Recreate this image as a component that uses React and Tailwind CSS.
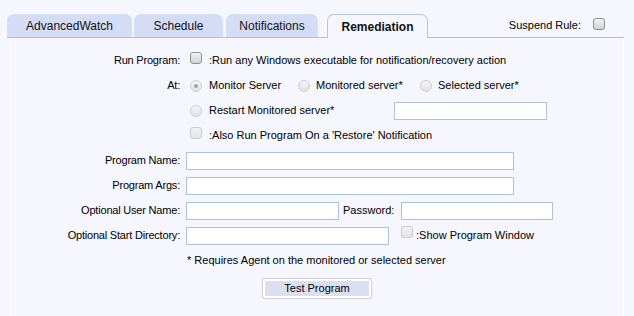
import React from 'react';

const Check = ({ disabled }) => (
  <span
    className={`inline-block w-[12px] h-[12px] shrink-0 rounded-[3px] border ${
      disabled
        ? 'border-[#cbcbcb] bg-linear-to-b from-[#f3f3f3] to-[#e4e4e4]'
        : 'border-[#8f8f8f] bg-linear-to-b from-[#f2f2f2] to-[#d3d3d3]'
    }`}
  />
);

const Radio = ({ checked }) => (
  <span className="flex items-center justify-center w-[12px] h-[12px] shrink-0 rounded-full border border-[#cdcdcd] bg-linear-to-b from-[#f6f6f6] to-[#e2e2e2]">
    {checked && <span className="w-[4px] h-[4px] rounded-full bg-[#a0a0a0]" />}
  </span>
);

const Field = ({ className }) => (
  <input
    type="text"
    className={`h-[18px] border border-[#abc1dd] bg-white outline-none text-[11px] px-1 ${className}`}
  />
);

const Row = ({ label, children }) => (
  <div className="flex h-[25px] items-center">
    <div className="w-[170px] pr-[1px] text-right tracking-[-0.2px]">{label}</div>
    <div className="ml-[5px] flex items-center">{children}</div>
  </div>
);

const tabs = [
  { name: 'AdvancedWatch', w: 'w-[125px]', m: '' },
  { name: 'Schedule', w: 'w-[89px]', m: 'ml-[2px]' },
  { name: 'Notifications', w: 'w-[92px]', m: 'ml-[3px]' },
];

export default function App() {
  return (
    <div className="w-[634px] h-[316px] overflow-hidden bg-[#f5f6fe] text-[11px] text-black font-['Liberation_Sans',Arial,sans-serif]">
      {/* tab strip */}
      <div className="flex items-end pt-[14px] ml-[7px] mr-[10px] border-b border-[#aec0dc]">
        {tabs.map((t) => (
          <div
            key={t.name}
            className={`${t.w} ${t.m} h-[23px] flex items-center justify-center rounded-t-[7px] bg-[#d5ddf6] text-[12px] text-[#111]`}
          >
            {t.name}
          </div>
        ))}
        <div className="ml-[9px] w-[101px] h-[24px] -mb-px flex items-center justify-center rounded-t-[7px] border border-b-0 border-[#b5c6e0] bg-[#f5f6fe] text-[12px] font-bold text-[#111]">
          Remediation
        </div>
        <div className="ml-auto mr-[19px] self-center flex items-center">
          <span>Suspend Rule:</span>
          <span className="ml-[12px] mt-[1px]">
            <Check />
          </span>
        </div>
      </div>

      {/* panel */}
      <div className="mx-[10px] h-[280px] border-x border-white pt-[10px]">
        <Row label="Run Program:">
          <span className="ml-[4px]"><Check /></span>
          <span className="ml-[7px]">:Run any Windows executable for notification/recovery action</span>
        </Row>
        <Row label="At:">
          <span className="ml-[4px] w-[108px] flex items-center">
            <Radio checked />
            <span className="ml-[7px]">Monitor Server</span>
          </span>
          <span className="w-[122px] flex items-center">
            <Radio />
            <span className="ml-[6px]">Monitored server*</span>
          </span>
          <span className="flex items-center">
            <Radio />
            <span className="ml-[6px]">Selected server*</span>
          </span>
        </Row>
        <Row label="">
          <span className="ml-[4px] w-[204px] flex items-center">
            <Radio />
            <span className="ml-[7px]">Restart Monitored server*</span>
          </span>
          <Field className="w-[153px]" />
        </Row>
        <Row label="">
          <span className="ml-[4px]"><Check disabled /></span>
          <span className="ml-[7px]">:Also Run Program On a 'Restore' Notification</span>
        </Row>
        <Row label="Program Name:">
          <Field className="w-[328px]" />
        </Row>
        <Row label="Program Args:">
          <Field className="w-[328px]" />
        </Row>
        <Row label="Optional User Name:">
          <Field className="w-[153px]" />
          <span className="ml-[4px] w-[58px]">Password:</span>
          <Field className="w-[152px]" />
        </Row>
        <Row label="Optional Start Directory:">
          <Field className="w-[203px]" />
          <span className="ml-[12px] -mt-[2px]"><Check disabled /></span>
          <span className="ml-[3px]">:Show Program Window</span>
        </Row>
        <Row label="">
          <span className="ml-[1px]">* Requires Agent on the monitored or selected server</span>
        </Row>
        <div className="mt-[5px] flex justify-center">
          <button className="w-[110px] h-[21px] rounded-[3px] border border-[#d2d3dc] bg-white p-[2px] shadow-[0_0_1px_#c8c8d0]">
            <span className="flex h-full w-full items-center justify-center bg-[#dcdff1] text-[11px] text-black">
              Test Program
            </span>
          </button>
        </div>
      </div>
    </div>
  );
}
